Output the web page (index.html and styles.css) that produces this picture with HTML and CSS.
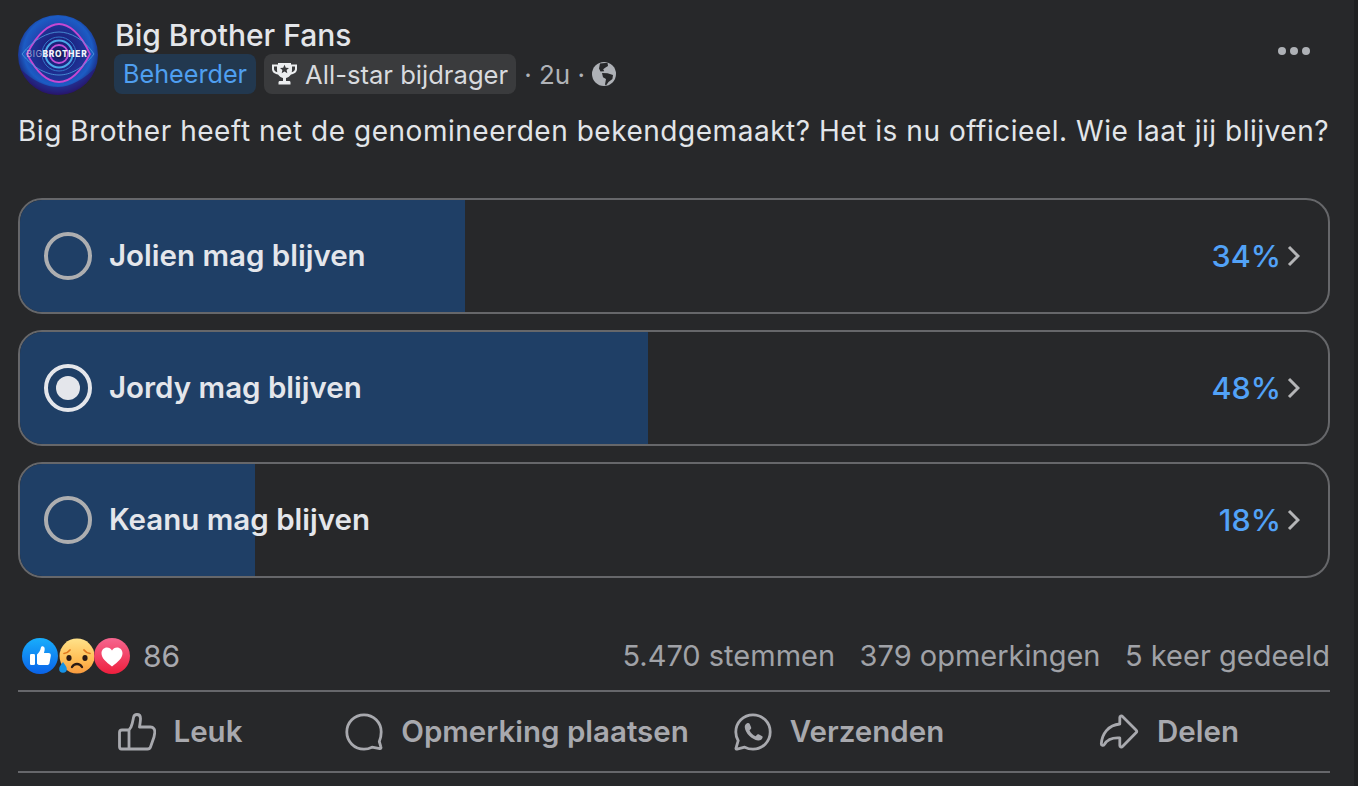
FILE: index.html
```html
<!DOCTYPE html>
<html lang="nl">
<head>
<meta charset="utf-8">
<title>Big Brother Fans</title>
<link rel="stylesheet" href="styles.css">
</head>
<body>
<main class="post">
  <header class="head">
    <div class="avatar">
      <svg viewBox="0 0 80 80" width="80" height="80">
        <defs>
          <radialGradient id="av" cx="50%" cy="45%" r="55%">
            <stop offset="0" stop-color="#171a62"/>
            <stop offset=".3" stop-color="#1b2784"/>
            <stop offset=".55" stop-color="#1f45b0"/>
            <stop offset=".78" stop-color="#1c5cc4"/>
            <stop offset=".92" stop-color="#1a3590"/>
            <stop offset="1" stop-color="#26145e"/>
          </radialGradient>
          <clipPath id="avc"><circle cx="40" cy="40" r="40"/></clipPath>
        </defs>
        <circle cx="40" cy="40" r="40" fill="url(#av)"/>
        <path d="M-2 50C14 66 28 72 40 72s28-8 42-24v34H-2Z" fill="#2c1470" opacity=".6" clip-path="url(#avc)"/>
        <path d="M9 39C20 17 32 9 41 9s21 8 31 30C61 60 51 67 41 67S20 60 9 39Z" fill="#1d1f7c" opacity=".55"/>
        <path d="M9 39C20 17 32 9 41 9s21 8 31 30C61 60 51 67 41 67S20 60 9 39Z" fill="none" stroke="#c648d2" stroke-width="1.800"/>
        <path d="M4 39C16 24 30 17 41 17s25 7 35 22C64 54 52 60 41 60S16 54 4 39Z" fill="none" stroke="#4f9ee0" stroke-width=".8"/>
        <circle cx="41" cy="39" r="17" fill="none" stroke="#3378cc" stroke-width="1"/>
        <circle cx="41" cy="39" r="13.500" fill="none" stroke="#4aa8e8" stroke-width="2"/>
        <circle cx="41" cy="39" r="9" fill="none" stroke="#c050d6" stroke-width="1.800"/>
        <circle cx="41" cy="39" r="5" fill="#171a60"/>
        <text x="39" y="42" class="av-text" text-anchor="middle"><tspan class="av-thin">BIG</tspan>BROTHER</text>
      </svg>
    </div>
    <div class="meta">
      <div class="name">Big Brother Fans</div>
      <div class="sub">
        <span class="tag tag-admin">Beheerder</span>
        <span class="tag tag-star">
          <svg class="trophy" viewBox="0 0 25 22" width="25" height="22">
            <path fill="#eceef0" fill-rule="evenodd" d="M6 0H19V1.500H25V6C25 9 22.500 11 19 11.500C18 13 16 14.500 14 15V18H17C18 18 18.500 18.500 18.500 19.500V21.500H6.500V19.500C6.500 18.500 7 18 8 18H11V15C9 14.500 7 13 6 11.500C2.500 11 0 9 0 6V1.500H6ZM2 3.500V6C2 7.500 3.500 9 5.300 9.300C5.100 8.500 5 7.500 5 6V3.500ZM23 3.500H20V6C20 7.500 19.900 8.500 19.700 9.300C21.500 9 23 7.500 23 6Z"/>
            <path fill="#3a3b3d" d="m12.500 1.800 1.300 2.900 3.200.3-2.400 2.100.7 3.100-2.800-1.600-2.800 1.600.7-3.100L8 5l3.200-.3Z"/>
          </svg>
          All-star bijdrager
        </span>
        <span class="time">· 2u ·</span>
        <svg class="globe" viewBox="0 0 24 24" width="24" height="24">
          <circle cx="12" cy="12" r="12" fill="#aeb1b6"/>
          <path fill="#27282a" d="M8 1.500 15.500 .8 16 4l-2.500 1.500-2.300 1.800 1 2L8.500 9.500 7 6.500ZM10 11l5.500.3 5.500 1.700-.6 4-3.900 3-2.500 3.500-1-1 1-5.500-3-1.800Z"/>
        </svg>
      </div>
    </div>
    <div class="more"><i></i><i></i><i></i></div>
  </header>

  <p class="text">Big Brother heeft net de genomineerden bekendgemaakt? Het is nu officieel. Wie laat jij blijven?</p>

  <section class="poll">
    <div class="option">
      <div class="fill" style="width:34%"></div>
      <span class="radio"></span>
      <span class="label">Jolien mag blijven</span>
      <span class="pct">34%</span>
      <svg class="chev" viewBox="0 0 13 22" width="13" height="22"><path d="M2 2l9 9-9 9" fill="none" stroke="#b4b5b7" stroke-width="3"/></svg>
    </div>
    <div class="option">
      <div class="fill" style="width:48%"></div>
      <span class="radio radio-on"><b></b></span>
      <span class="label">Jordy mag blijven</span>
      <span class="pct">48%</span>
      <svg class="chev" viewBox="0 0 13 22" width="13" height="22"><path d="M2 2l9 9-9 9" fill="none" stroke="#b4b5b7" stroke-width="3"/></svg>
    </div>
    <div class="option">
      <div class="fill" style="width:18%"></div>
      <span class="radio"></span>
      <span class="label">Keanu mag blijven</span>
      <span class="pct">18%</span>
      <svg class="chev" viewBox="0 0 13 22" width="13" height="22"><path d="M2 2l9 9-9 9" fill="none" stroke="#b4b5b7" stroke-width="3"/></svg>
    </div>
  </section>

  <div class="stats">
    <div class="reactions">
      <svg class="emoji e-like" viewBox="0 0 36 36" width="36" height="36">
        <defs>
          <linearGradient id="lk" x1="0" y1="0" x2="0" y2="1"><stop offset="0" stop-color="#18aefc"/><stop offset="1" stop-color="#0a62e8"/></linearGradient>
        </defs>
        <circle cx="18" cy="18" r="18" fill="url(#lk)"/>
        <rect x="8" y="16" width="5" height="11" rx="1.300" fill="#fff"/>
        <path fill="#fff" d="M15 16.500c2-2 3.400-4 3.800-6.500.2-1.300 1-2 2-1.800 1.500.3 2.200 2 1.800 4l-.6 2.800h4.500c1.700 0 2.600 1.200 2.300 2.700l-1.300 7.300c-.3 1.400-1.200 2-2.500 2H18c-1.500 0-3-.7-3-1.500Z"/>
      </svg>
      <svg class="emoji e-sad" viewBox="0 0 36 36" width="36" height="36">
        <defs>
          <linearGradient id="sd" x1="0" y1="0" x2="0" y2="1"><stop offset="0" stop-color="#ffe28a"/><stop offset=".6" stop-color="#ffbe55"/><stop offset="1" stop-color="#f89a3e"/></linearGradient>
        </defs>
        <circle cx="19" cy="18" r="17.500" fill="url(#sd)"/>
        <path d="M6 15.500c2.500-.3 4.500-1.500 6-3.500M32 15.500c-2.500-.3-4.500-1.500-6-3.500" fill="none" stroke="#e0781f" stroke-width="1.700" stroke-linecap="round"/>
        <ellipse cx="11" cy="20" rx="2.600" ry="3" fill="#2b1a14"/>
        <ellipse cx="27" cy="20" rx="2.600" ry="3" fill="#2b1a14"/>
        <path d="M14 29c1.200-2 3-3 5-3s3.800 1 5 3" fill="none" stroke="#2b1a14" stroke-width="2.300" stroke-linecap="round"/>
        <path d="M5 24c2 3 3.800 4.700 3.800 7a3.800 3.800 0 0 1-7.600 0c0-2.300 1.800-4 3.800-7Z" fill="#1592e6"/>
      </svg>
      <svg class="emoji e-love" viewBox="0 0 36 36" width="36" height="36">
        <defs>
          <linearGradient id="lv" x1="0" y1="0" x2="0" y2="1"><stop offset="0" stop-color="#f6668f"/><stop offset="1" stop-color="#ee1f3d"/></linearGradient>
        </defs>
        <circle cx="18" cy="18" r="18" fill="url(#lv)"/>
        <path fill="#fff" d="M18 28.500C12 24 7.500 20.200 7.500 15.300c0-3.400 2.500-5.800 5.500-5.800 2.100 0 3.900 1 5 3 1.100-2 2.900-3 5-3 3 0 5.500 2.400 5.500 5.800 0 4.900-4.500 8.700-10.500 13.200Z"/>
      </svg>
      <span class="count">86</span>
    </div>
    <div class="counts">
      <span>5.470 stemmen</span>
      <span>379 opmerkingen</span>
      <span>5 keer gedeeld</span>
    </div>
  </div>

  <nav class="actions">
    <div class="act act-like">
      <svg viewBox="0 0 38 38" width="38" height="38" class="ic"><path d="M11 17L13 14C14.500 11 15 7 15.500 4.500C16 2 17.500 1.500 19 1.500C21 1.500 22.500 3 22.500 5.500C22.500 8 22 11 21.500 14H32.500C35.500 14 37 16.500 36.800 19.500L36 24L32.500 34C32 35.500 31 36 29.500 36H3.500C2 36 1.500 35 1.500 33.500V19.500C1.500 18 2.500 17 4 17H11V36" fill="none" stroke="#a8a9ae" stroke-width="2.800" stroke-linejoin="round"/></svg>
      <span>Leuk</span>
    </div>
    <div class="act act-comment">
      <svg viewBox="0 0 38 38" width="38" height="38" class="ic"><path d="M19 1.800C9.500 1.800 1.800 9.500 1.800 19S9.500 36.200 19 36.200c3 0 5.600-.8 8-2l7.800 1.400c1 .1 1.500-.6 1.100-1.500l-1.600-5.600c1.200-2.800 1.900-6 1.900-9.500C36.200 9.500 28.500 1.800 19 1.800Z" fill="none" stroke="#a8a9ae" stroke-width="2.800" stroke-linejoin="round"/></svg>
      <span>Opmerking plaatsen</span>
    </div>
    <div class="act act-send">
      <svg viewBox="0 0 38 38" width="38" height="38" class="ic">
        <path d="M19 1.800C9.500 1.800 1.800 9.500 1.800 19c0 3.200.9 6.100 2.400 8.700L2 35.200c-.2.700.3 1.100 1 1l7.700-2c2.500 1.300 5.300 2 8.300 2 9.500 0 17.200-7.700 17.200-17.200S28.500 1.800 19 1.800Z" fill="none" stroke="#a8a9ae" stroke-width="2.800" stroke-linejoin="round"/>
        <path d="M13.500 10c-1.800.6-3 2.300-2.700 4.500.7 5.800 6.700 12 13.300 13 2.200.2 4-1 4.500-3 .2-.8-.2-1.300-.8-1.600l-3.200-1.600c-.7-.3-1.200-.2-1.600.4l-1.300 1.500c-3-1.200-5-3.300-6.200-6l1.300-1.300c.5-.5.600-1 .3-1.700l-1.500-3.400c-.4-.8-1.100-1-2.100-.8Z" fill="#a8a9ae"/>
      </svg>
      <span>Verzenden</span>
    </div>
    <div class="act act-share">
      <svg viewBox="0 0 40 38" width="40" height="38" class="ic"><path d="M23.500 3.500L37 17c.8.800.8 2 0 2.800L23.500 33.500c-1 1-2.700.3-2.700-1V25c-7-.5-12.500 1.500-15.500 6.500c-1 1.500-3 1-3-.5c.5-10 7-19 18.500-20V4.500c0-1.300 1.700-2 2.700-1Z" fill="none" stroke="#a8a9ae" stroke-width="2.800" stroke-linejoin="round"/></svg>
      <span>Delen</span>
    </div>
  </nav>
</main>
</body>
</html>
```
FILE: styles.css
```css
* { box-sizing: border-box; }
html, body { margin: 0; height: 100%; }
body {
  background: #1f2022;
  font-family: Inter, "Liberation Sans", sans-serif;
  overflow: hidden;
}
.post {
  width: 1354px;
  height: 786px;
  background: #27282a;
  padding: 15px 24px 0 18px;
  color: #e2e5e9;
}
.head { display: flex; align-items: flex-start; height: 80px; }
.avatar { width: 80px; height: 80px; flex: none; }
.avatar svg { display: block; }
.av-text { font: 800 8.400px Inter, sans-serif; fill: #f4f4fa; letter-spacing: .7px; }
.av-thin { font-weight: 300; fill: #c9c9e0; }
.meta { margin-left: 17px; flex: 1; }
.name { font-size: 30px; font-weight: 500; line-height: 34px; margin-top: 3px; color: #e4e6ea; }
.sub { display: flex; align-items: center; margin: 2px 0 0 -1px; font-size: 25px; color: #b0b3b8; }
.tag { display: inline-flex; align-items: center; height: 40px; border-radius: 8px; padding: 0 9px; white-space: nowrap; }
.tag-admin { background: #22384f; color: #4f9ff0; font-size: 25.200px; }
.tag-star { background: #3a3b3d; color: #d8dade; margin-left: 8px; padding: 0 8px; font-size: 25.600px; }
.trophy { margin-right: 8px; }
.time { margin-left: 8px; font-size: 26px; }
.globe { margin-left: 7px; }
.more { display: flex; gap: 4px; margin: 32px 20px 0 0; width: 32px; }
.more i { width: 8px; height: 8px; border-radius: 50%; background: #aeb1b6; }
.text { margin: 15px 0 0; font-size: 28px; letter-spacing: .53px; line-height: 42px; color: #e2e5e9; white-space: nowrap; }
.poll { display: flex; flex-direction: column; gap: 16px; margin-top: 46px; width: 1312px; }
.option {
  position: relative;
  display: flex;
  align-items: center;
  height: 116px;
  border: 2px solid #66676a;
  border-radius: 24px;
  overflow: hidden;
  padding: 0 28px 0 24px;
}
.fill { position: absolute; left: 0; top: 0; bottom: 0; background: #1f3f66; }
.radio {
  position: relative;
  width: 48px;
  height: 48px;
  border-radius: 50%;
  border: 4px solid #adaeb0;
  flex: none;
}
.radio-on { border-color: #e4e6eb; display: flex; align-items: center; justify-content: center; }
.radio-on b { width: 24px; height: 24px; border-radius: 50%; background: #e4e6eb; }
.label { position: relative; margin-left: 17px; padding-bottom: 2px; font-size: 29.500px; font-weight: 600; flex: 1; color: #e4e6eb; }
.pct { position: relative; padding-bottom: 2px; font-size: 30.500px; font-weight: 500; color: #52a2f7; }
.chev { position: relative; margin-left: 6px; }
.stats { display: flex; justify-content: space-between; align-items: center; margin-top: 52px; height: 52px; width: 1312px; padding-left: 4px; }
.reactions { display: flex; align-items: center; }
.emoji { display: block; }
.count { margin-left: 13px; font-size: 30px; color: #a8a9ae; }
.counts { display: flex; gap: 24.500px; padding-bottom: 2px; font-size: 29px; color: #a0a2a7; }
.actions {
  display: grid;
  grid-template-columns: 324px 350px 294px 344px;
  width: 1312px;
  height: 83px;
  margin-top: 8px;
  border-top: 2px solid #66676b;
  border-bottom: 2px solid #66676b;
}
.act { display: flex; align-items: center; justify-content: center; gap: 18px; font-size: 29.500px; font-weight: 600; color: #a8a9ae; }
.act span { padding-bottom: 1px; }
.act-share { padding-left: 22px; }
.ic { flex: none; display: block; }
```
